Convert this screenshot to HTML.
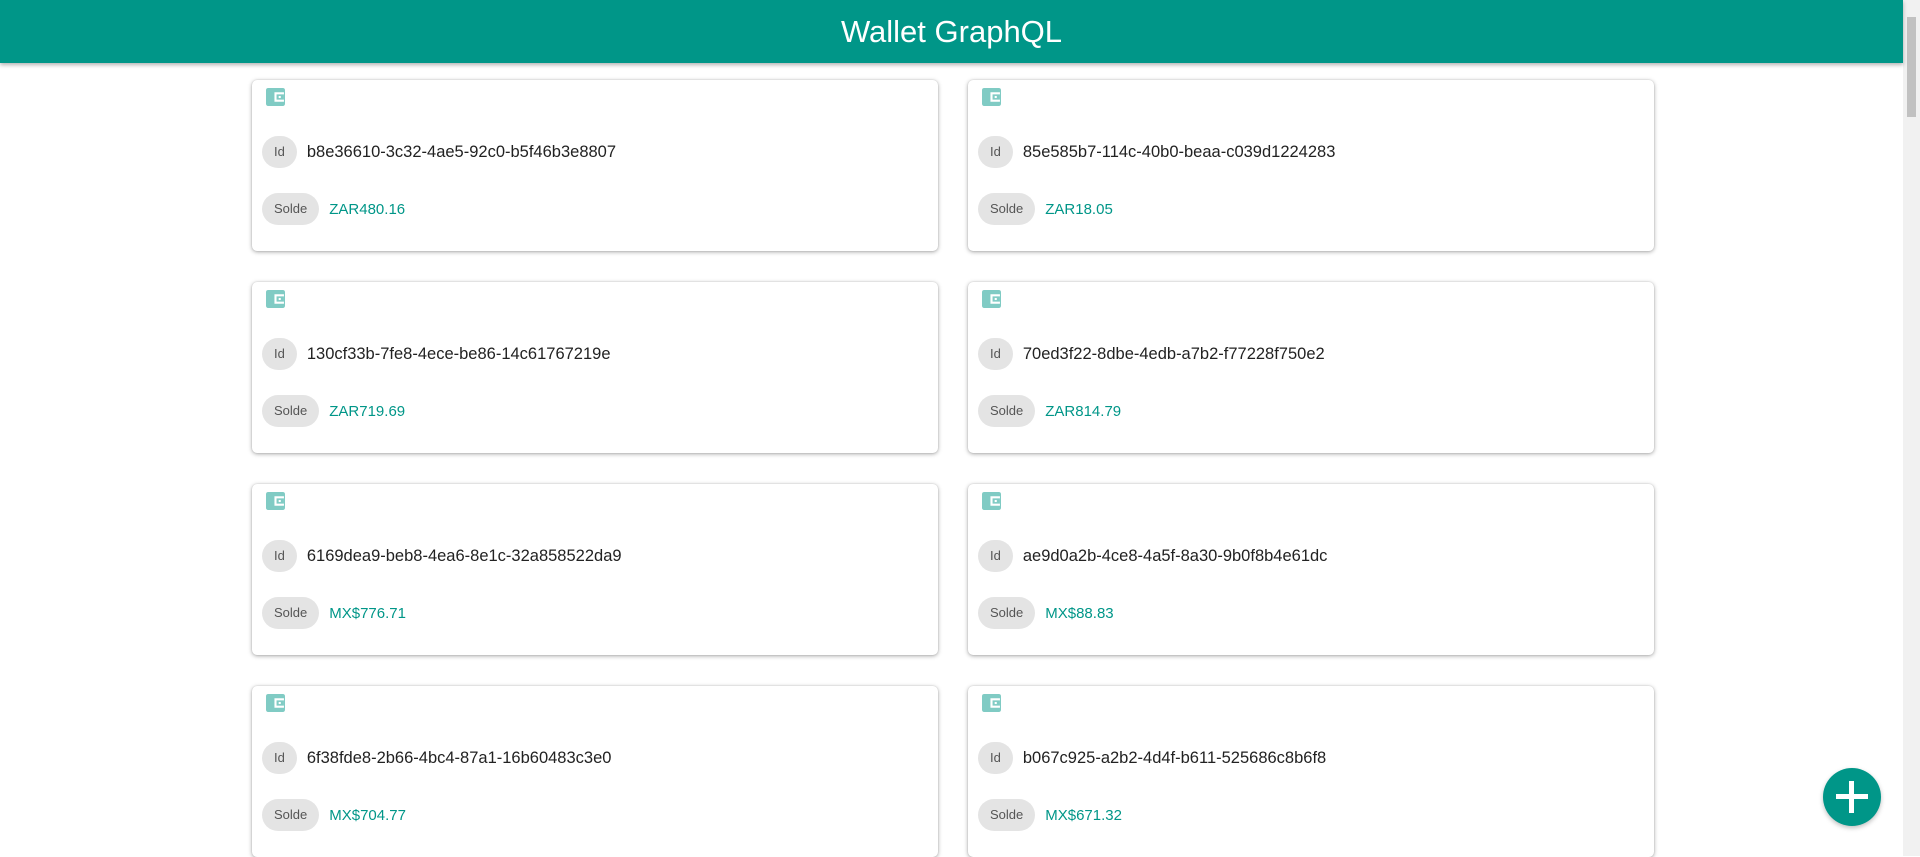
<!DOCTYPE html>
<html><head><meta charset="utf-8"><style>
*{box-sizing:border-box;margin:0;padding:0}
html,body{width:1920px;height:856px;overflow:hidden;background:#fff;font-family:"Liberation Sans",sans-serif}
.hdr{position:absolute;left:0;top:0;width:1903px;height:63px;background:#009688;box-shadow:0 2px 4px rgba(0,0,0,.3);color:#fff;font-size:31px;text-align:center;line-height:63px;z-index:2}
.sb{position:absolute;right:0;top:0;width:17px;height:856px;background:#f1f1f1}
.sb .th{position:absolute;left:4px;top:17px;width:9px;height:100px;background:#c1c1c1}
.card{position:absolute;width:686px;height:171px;background:#fff;border-radius:5px;box-shadow:0 1px 4px rgba(0,0,0,.35),0 0 1px rgba(0,0,0,.2)}
.ic{position:absolute;left:14px;top:8px}
.row{position:absolute;left:10px;display:flex;align-items:center;height:32px}
.chip{height:32px;border-radius:16px;background:#e4e4e4;color:#555;font-size:13px;line-height:32px;padding:0 12px;margin-right:10px}
.v{font-size:16.5px;color:#222}
.v.m{color:#009688;font-size:15px}
.fab{position:absolute;left:1823px;top:768px;width:58px;height:58px;border-radius:50%;background:#009688;box-shadow:0 2px 5px rgba(0,0,0,.25)}
.fab:before{content:"";position:absolute;left:13px;top:26px;width:32px;height:5px;background:#fff}
.fab:after{content:"";position:absolute;left:26px;top:13px;width:5px;height:32px;background:#fff}
</style></head><body>
<div class="hdr">Wallet GraphQL</div>
<div class="sb"><div class="th"></div></div>

<div class="card" style="left:252px;top:80px"><svg class="ic" width="19" height="18" viewBox="0 0 18 17"><rect x="0" y="0" width="18" height="17" rx="2" fill="#80cbc4"/><rect x="8" y="4" width="9" height="9" fill="#fff"/><rect x="10" y="6" width="7" height="5" fill="#80cbc4"/><rect x="12" y="7.5" width="2" height="2" fill="#fff"/></svg>
<div class="row" style="top:56px"><span class="chip">Id</span><span class="v">b8e36610-3c32-4ae5-92c0-b5f46b3e8807</span></div>
<div class="row" style="top:113px"><span class="chip">Solde</span><span class="v m">ZAR480.16</span></div></div>

<div class="card" style="left:968px;top:80px"><svg class="ic" width="19" height="18" viewBox="0 0 18 17"><rect x="0" y="0" width="18" height="17" rx="2" fill="#80cbc4"/><rect x="8" y="4" width="9" height="9" fill="#fff"/><rect x="10" y="6" width="7" height="5" fill="#80cbc4"/><rect x="12" y="7.5" width="2" height="2" fill="#fff"/></svg>
<div class="row" style="top:56px"><span class="chip">Id</span><span class="v">85e585b7-114c-40b0-beaa-c039d1224283</span></div>
<div class="row" style="top:113px"><span class="chip">Solde</span><span class="v m">ZAR18.05</span></div></div>

<div class="card" style="left:252px;top:282px"><svg class="ic" width="19" height="18" viewBox="0 0 18 17"><rect x="0" y="0" width="18" height="17" rx="2" fill="#80cbc4"/><rect x="8" y="4" width="9" height="9" fill="#fff"/><rect x="10" y="6" width="7" height="5" fill="#80cbc4"/><rect x="12" y="7.5" width="2" height="2" fill="#fff"/></svg>
<div class="row" style="top:56px"><span class="chip">Id</span><span class="v">130cf33b-7fe8-4ece-be86-14c61767219e</span></div>
<div class="row" style="top:113px"><span class="chip">Solde</span><span class="v m">ZAR719.69</span></div></div>

<div class="card" style="left:968px;top:282px"><svg class="ic" width="19" height="18" viewBox="0 0 18 17"><rect x="0" y="0" width="18" height="17" rx="2" fill="#80cbc4"/><rect x="8" y="4" width="9" height="9" fill="#fff"/><rect x="10" y="6" width="7" height="5" fill="#80cbc4"/><rect x="12" y="7.5" width="2" height="2" fill="#fff"/></svg>
<div class="row" style="top:56px"><span class="chip">Id</span><span class="v">70ed3f22-8dbe-4edb-a7b2-f77228f750e2</span></div>
<div class="row" style="top:113px"><span class="chip">Solde</span><span class="v m">ZAR814.79</span></div></div>

<div class="card" style="left:252px;top:484px"><svg class="ic" width="19" height="18" viewBox="0 0 18 17"><rect x="0" y="0" width="18" height="17" rx="2" fill="#80cbc4"/><rect x="8" y="4" width="9" height="9" fill="#fff"/><rect x="10" y="6" width="7" height="5" fill="#80cbc4"/><rect x="12" y="7.5" width="2" height="2" fill="#fff"/></svg>
<div class="row" style="top:56px"><span class="chip">Id</span><span class="v">6169dea9-beb8-4ea6-8e1c-32a858522da9</span></div>
<div class="row" style="top:113px"><span class="chip">Solde</span><span class="v m">MX$776.71</span></div></div>

<div class="card" style="left:968px;top:484px"><svg class="ic" width="19" height="18" viewBox="0 0 18 17"><rect x="0" y="0" width="18" height="17" rx="2" fill="#80cbc4"/><rect x="8" y="4" width="9" height="9" fill="#fff"/><rect x="10" y="6" width="7" height="5" fill="#80cbc4"/><rect x="12" y="7.5" width="2" height="2" fill="#fff"/></svg>
<div class="row" style="top:56px"><span class="chip">Id</span><span class="v">ae9d0a2b-4ce8-4a5f-8a30-9b0f8b4e61dc</span></div>
<div class="row" style="top:113px"><span class="chip">Solde</span><span class="v m">MX$88.83</span></div></div>

<div class="card" style="left:252px;top:686px"><svg class="ic" width="19" height="18" viewBox="0 0 18 17"><rect x="0" y="0" width="18" height="17" rx="2" fill="#80cbc4"/><rect x="8" y="4" width="9" height="9" fill="#fff"/><rect x="10" y="6" width="7" height="5" fill="#80cbc4"/><rect x="12" y="7.5" width="2" height="2" fill="#fff"/></svg>
<div class="row" style="top:56px"><span class="chip">Id</span><span class="v">6f38fde8-2b66-4bc4-87a1-16b60483c3e0</span></div>
<div class="row" style="top:113px"><span class="chip">Solde</span><span class="v m">MX$704.77</span></div></div>

<div class="card" style="left:968px;top:686px"><svg class="ic" width="19" height="18" viewBox="0 0 18 17"><rect x="0" y="0" width="18" height="17" rx="2" fill="#80cbc4"/><rect x="8" y="4" width="9" height="9" fill="#fff"/><rect x="10" y="6" width="7" height="5" fill="#80cbc4"/><rect x="12" y="7.5" width="2" height="2" fill="#fff"/></svg>
<div class="row" style="top:56px"><span class="chip">Id</span><span class="v">b067c925-a2b2-4d4f-b611-525686c8b6f8</span></div>
<div class="row" style="top:113px"><span class="chip">Solde</span><span class="v m">MX$671.32</span></div></div>

<div class="fab"></div>
</body></html>
